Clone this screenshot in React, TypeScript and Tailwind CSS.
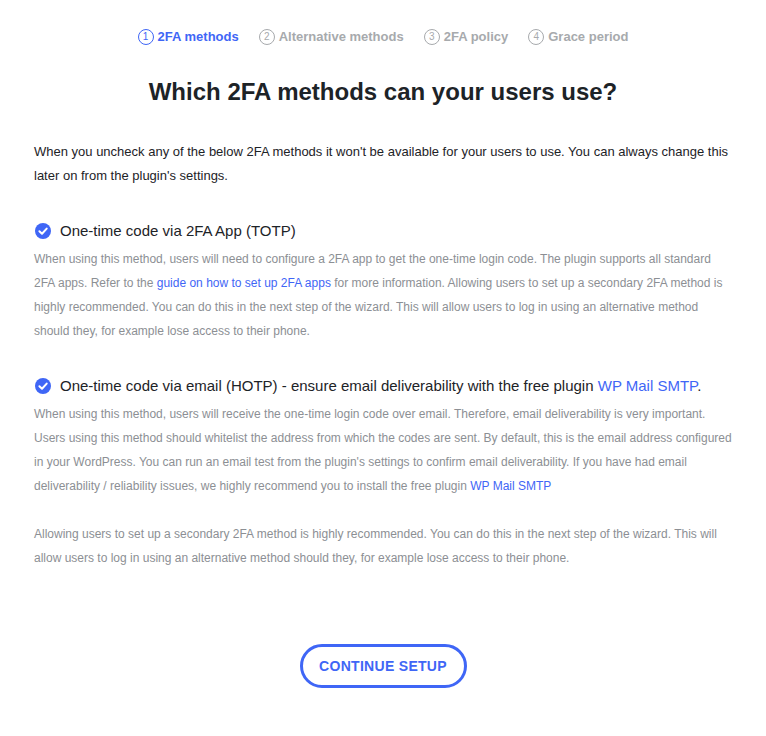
const blue = "text-[#3f66f6]";

function Step({ n, label, active }: { n: number; label: string; active?: boolean }) {
  return (
    <div className={`flex items-center gap-[4px] ${active ? "text-[#3f66f6]" : "text-[#a7aaad]"}`}>
      <span
        className={`flex h-4 w-4 items-center justify-center rounded-full border text-[10px] leading-none font-normal ${
          active ? "border-[#3f66f6]" : "border-[#a7aaad]"
        }`}
      >
        {n}
      </span>
      <span className="text-[13px] font-bold">{label}</span>
    </div>
  );
}

function Check() {
  return (
    <svg width="16" height="16" viewBox="0 0 16 16" className="shrink-0">
      <circle cx="8" cy="8" r="8" fill="#3f66f6" />
      <path d="M4.4 8.2 L7 10.7 L11.7 5.6" fill="none" stroke="#fff" strokeWidth="2" strokeLinecap="round" strokeLinejoin="round" />
    </svg>
  );
}

export default function App() {
  return (
    <div className="min-h-[736px] w-full bg-white px-[34px] font-['Liberation_Sans',Arial,sans-serif]">
      <div className="flex h-5 items-center justify-center gap-[20px] pt-[27px] box-content">
        <Step n={1} label="2FA methods" active />
        <Step n={2} label="Alternative methods" />
        <Step n={3} label="2FA policy" />
        <Step n={4} label="Grace period" />
      </div>

      <h1 className="mt-[30px] text-center text-[24px] leading-[30px] font-bold text-[#1d2327]">
        Which 2FA methods can your users use?
      </h1>

      <p className="mt-[33px] text-[13px] leading-6 text-[#1d2327]">
        When you uncheck any of the below 2FA methods it won't be available for your users to use. You can always change this
        later on from the plugin's settings.
      </p>

      <div className="mt-[31px]">
        <div className="flex items-center gap-[9px] pl-px">
          <Check />
          <span className="text-[15px] leading-6 text-[#1d2327]">One-time code via 2FA App (TOTP)</span>
        </div>
        <p className="mt-[4px] text-[12px] leading-6 text-[#8c8f94]">
          When using this method, users will need to configure a 2FA app to get the one-time login code. The plugin supports all standard
          2FA apps. Refer to the <a className={blue}>guide on how to set up 2FA apps</a> for more information. Allowing users to set up a secondary 2FA method is
          highly recommended. You can do this in the next step of the wizard. This will allow users to log in using an alternative method
          should they, for example lose access to their phone.
        </p>
      </div>

      <div className="mt-[31px]">
        <div className="flex items-center gap-[9px] pl-px">
          <Check />
          <span className="text-[15px] leading-6 text-[#1d2327]">
            One-time code via email (HOTP) - ensure email deliverability with the free plugin <a className={blue}>WP Mail SMTP</a>.
          </span>
        </div>
        <p className="mt-[4px] text-[12px] leading-6 text-[#8c8f94]">
          When using this method, users will receive the one-time login code over email. Therefore, email deliverability is very important.
          Users using this method should whitelist the address from which the codes are sent. By default, this is the email address configured
          in your WordPress. You can run an email test from the plugin's settings to confirm email deliverability. If you have had email
          deliverability / reliability issues, we highly recommend you to install the free plugin <a className={blue}>WP Mail SMTP</a>
        </p>
        <p className="mt-6 text-[12px] leading-6 text-[#8c8f94]">
          Allowing users to set up a secondary 2FA method is highly recommended. You can do this in the next step of the wizard. This will
          allow users to log in using an alternative method should they, for example lose access to their phone.
        </p>
      </div>

      <div className="mt-[74px] flex justify-center">
        <button className="h-[44px] w-[167px] rounded-full border-[3px] border-[#3f66f6] text-[14px] font-bold tracking-[0.3px] text-[#3f66f6]">
          CONTINUE SETUP
        </button>
      </div>
    </div>
  );
}
